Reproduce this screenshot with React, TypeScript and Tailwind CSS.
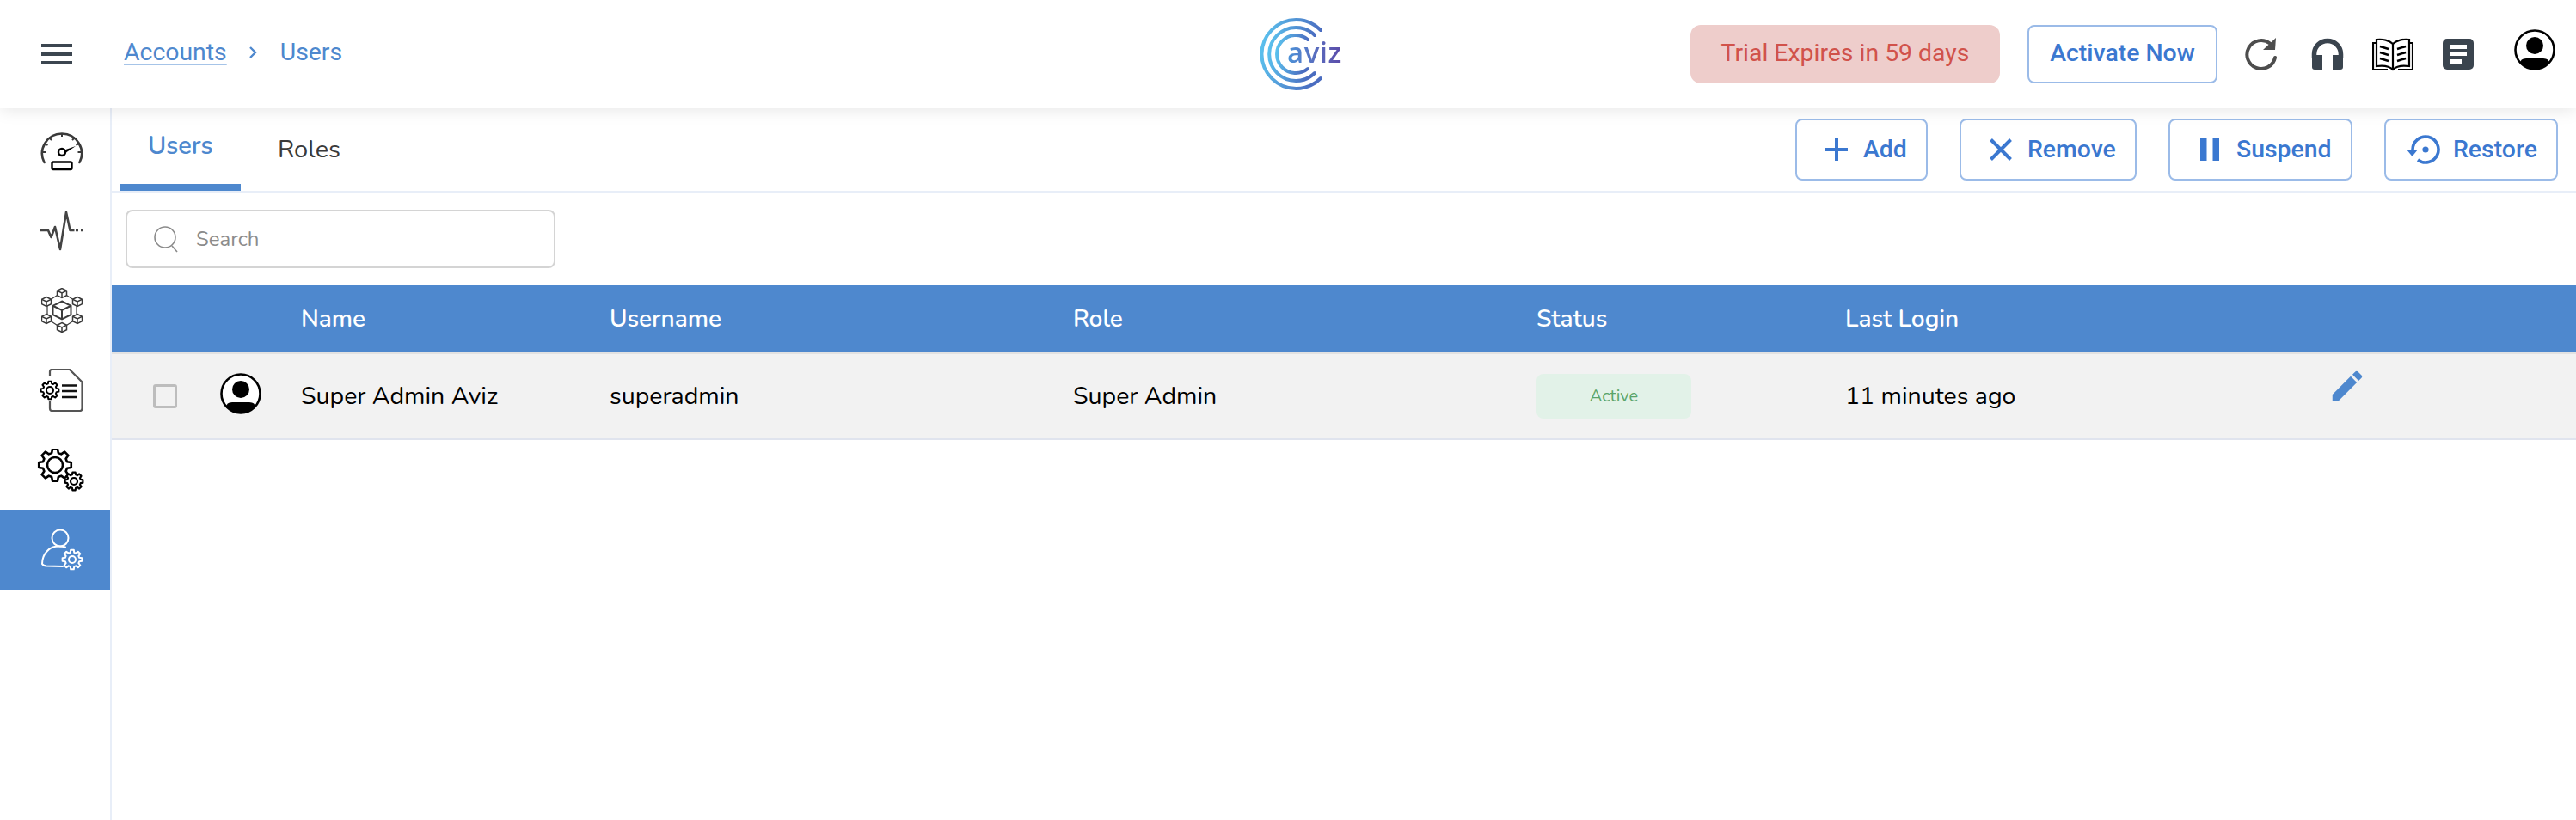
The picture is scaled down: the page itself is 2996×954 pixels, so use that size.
import React from "react";
import { MdEdit } from "react-icons/md";

const gear = (cx: number, cy: number, rOut: number, rIn: number, teeth: number) => {
  const pts: string[] = [];
  const step = (Math.PI * 2) / teeth;
  for (let i = 0; i < teeth; i++) {
    const a = i * step - Math.PI / 2;
    const list: [number, number][] = [
      [rIn, a - step * 0.34],
      [rOut, a - step * 0.2],
      [rOut, a + step * 0.2],
      [rIn, a + step * 0.34],
    ];
    list.forEach(([r, t]) => pts.push(`${(cx + r * Math.cos(t)).toFixed(2)} ${(cy + r * Math.sin(t)).toFixed(2)}`));
  }
  return "M" + pts.join("L") + "Z";
};

const Gauge = () => (
  <svg width="50" height="46" viewBox="0 0 50 46" fill="none" stroke="#3a3a3a">
    <path d="M4.5 36A23 23 0 1 1 45.5 36" strokeWidth="2.6" strokeLinecap="round" />
    <path d="M25 2v4M10 7l3 3M40 7l-3 3M2.5 24h4M47.5 24h-4M5 14l3.5 2M45 14l-3.5 2" strokeWidth="2" />
    <circle cx="25" cy="24" r="4" strokeWidth="2.4" stroke="#000" />
    <path d="M28 21.5L41 17L29 25Z" fill="#000" stroke="none" />
    <rect x="13.5" y="35.5" width="23" height="8.5" rx="1.5" strokeWidth="2.4" stroke="#000" />
  </svg>
);

const Pulse = () => (
  <svg width="50" height="46" viewBox="0 0 50 46" fill="none" stroke="#444" strokeWidth="2.6" strokeLinejoin="round">
    <path d="M0 22h9l3.5 8L17 18l6 26L30 1l4.5 21h5" />
    <path d="M41 22h3M47 22h3" />
  </svg>
);

const Cube = ({ x, y, r }: { x: number; y: number; r: number }) => (
  <g>
    <path d={`M${x} ${y - r}L${x + r} ${y - r / 2}V${y + r / 2}L${x} ${y + r}L${x - r} ${y + r / 2}V${y - r / 2}Z`} />
    <path d={`M${x - r} ${y - r / 2}L${x} ${y}L${x + r} ${y - r / 2}M${x} ${y}V${y + r}`} />
  </g>
);

const Cubes = () => (
  <svg width="48" height="52" viewBox="0 0 48 52" fill="none" stroke="#3a3a3a" strokeWidth="1.5">
    <path d="M24 5L41 16V36L24 47L7 36V16Z" strokeWidth="1.2" />
    <g fill="#fff">
      <Cube x={24} y={6} r={5.5} />
      <Cube x={6} y={16} r={5.5} />
      <Cube x={42} y={16} r={5.5} />
      <Cube x={6} y={36} r={5.5} />
      <Cube x={42} y={36} r={5.5} />
      <Cube x={24} y={46} r={5.5} />
    </g>
    <g strokeWidth="2" fill="#fff">
      <Cube x={24} y={26} r={10.5} />
    </g>
  </svg>
);

const DocGear = () => (
  <svg width="50" height="50" viewBox="0 0 50 50" fill="none">
    <path d="M11 8V3.5Q11 1 13.5 1H34L48.5 15.5V46Q48.5 49 46 49H13.5Q11 49 11 46V38" stroke="#555" strokeWidth="2.2" />
    <path d={gear(11, 25, 10.5, 8, 8)} stroke="#000" strokeWidth="2" strokeLinejoin="round" fill="#fff" />
    <circle cx="11" cy="25" r="4" stroke="#000" strokeWidth="2" />
    <path d="M25 19.5h17M25 26h17M25 33h17" stroke="#111" strokeWidth="2.4" />
  </svg>
);

const Gears = () => (
  <svg width="56" height="50" viewBox="0 0 56 50" fill="none" stroke="#000" strokeLinejoin="round">
    <path d={gear(21, 19, 19, 14.5, 8)} strokeWidth="2.6" />
    <circle cx="21" cy="19" r="9" strokeWidth="2.6" />
    <path d={gear(43, 38, 10.5, 8, 8)} strokeWidth="2.2" fill="#fff" />
    <circle cx="43" cy="38" r="4" strokeWidth="2.2" />
  </svg>
);

const UserGear = () => (
  <svg width="48" height="50" viewBox="0 0 48 50" fill="none" stroke="#fff" strokeLinejoin="round" strokeLinecap="round">
    <circle cx="22" cy="11" r="9.5" strokeWidth="2" />
    <path d="M28 21.5C21 19.5 12 20 7 26C3 30 1 36 1 41Q2 43 6 43.5L25 44" strokeWidth="2" />
    <path d={gear(36, 36, 11.5, 8.5, 8)} strokeWidth="2" />
    <circle cx="36" cy="36" r="4" strokeWidth="2" />
  </svg>
);

const Avatar = () => (
  <svg width="48" height="48" viewBox="0 0 48 48">
    <circle cx="24" cy="24" r="22.5" fill="#fff" stroke="#000" strokeWidth="2.6" />
    <circle cx="24" cy="19" r="10" fill="#000" />
    <path d="M7 40Q7 34 14 34H34Q41 34 41 40Q33 47 24 47Q15 47 7 40Z" fill="#000" />
  </svg>
);

const Logo = () => (
  <div className="relative w-[96px] h-[84px]">
    <svg width="74" height="84" viewBox="0 0 74 84" fill="none" className="absolute left-0 top-0" strokeLinecap="round" strokeWidth="4">
      <defs>
        <linearGradient id="lg" x1="0" y1="0" x2="1" y2="0.2">
          <stop offset="0" stopColor="#5cc6f0" />
          <stop offset="1" stopColor="#4a6cc0" />
        </linearGradient>
      </defs>
      <path d="M71 14A40 40 0 1 0 71 70" stroke="url(#lg)" />
      <path d="M64 20A31 31 0 1 0 64 64" stroke="url(#lg)" />
      <path d="M56 25A22 22 0 1 0 56 59" stroke="url(#lg)" />
    </svg>
    <span className="absolute left-[32px] top-[17px] font-['Open_Sans',sans-serif] font-semibold text-[33px] tracking-[0.5px] leading-[46px] bg-gradient-to-r from-[#4a92d8] to-[#5b4aa8] bg-clip-text text-transparent">
      aviz
    </span>
  </div>
);

const ActionButton = ({ icon, label, w, pl, gap }: { icon: React.ReactNode; label: string; w: string; pl: string; gap: string }) => (
  <button className={`${w} ${pl} ${gap} h-[72px] rounded-[8px] border-2 border-[#9bbbe8] bg-white flex items-center text-[#3b78d0] font-['Roboto',sans-serif] font-medium text-[28.4px]`}>
    {icon}
    <span>{label}</span>
  </button>
);

const cols = "grid grid-cols-[220px_359px_539px_539px_359px_1fr] items-center";

export default function App() {
  return (
    <div className="w-[2996px] h-[954px] bg-white flex flex-col overflow-hidden font-['Nunito','Noto_Sans',sans-serif]">
      <header className="relative z-10 h-[126px] shrink-0 bg-white flex items-center shadow-[0_2px_18px_rgba(0,0,0,0.1)]">
        <div className="w-[1465px] flex items-center pl-[48px]">
          <div className="w-[36px] flex flex-col gap-[6px]">
            <div className="h-[4px] bg-[#3c4650]" />
            <div className="h-[4px] bg-[#3c4650]" />
            <div className="h-[4px] bg-[#3c4650]" />
          </div>
          <nav className="ml-[60px] -mt-[3px] flex items-center text-[#4e88ce] font-['Roboto',sans-serif] text-[28.4px]">
            <span className="underline decoration-[#a6c4e8] decoration-2 underline-offset-4">Accounts</span>
            <svg width="10" height="14" viewBox="0 0 10 14" fill="none" stroke="#4e88ce" strokeWidth="2.4" className="ml-[25px] mr-[27px]"><path d="M2 1l6 6-6 6" /></svg>
            <span>Users</span>
          </nav>
        </div>
        <Logo />
        <div className="ml-[405px] flex items-center">
          <div className="w-[360px] h-[68px] pb-[2px] rounded-[12px] bg-[#eecdcb] flex items-center justify-center text-[#d1524a] font-['Roboto',sans-serif] text-[28.4px]">
            Trial Expires in 59 days
          </div>
          <button className="ml-[32px] w-[221px] h-[68px] pb-[2px] rounded-[8px] border-2 border-[#9bbbe8] flex items-center justify-center text-[#3b78d0] font-['Roboto',sans-serif] font-medium text-[28.4px]">
            Activate Now
          </button>
          <svg className="ml-[32px]" width="40" height="40" viewBox="0 0 40 40" fill="none">
            <path d="M29 7.5A16.5 16.5 0 1 0 35 24" stroke="#4d4d4d" strokeWidth="4" strokeLinecap="round" />
            <path d="M36 1L35 15H21Z" fill="#4d4d4d" />
          </svg>
          <svg className="ml-[37px]" width="38" height="38" viewBox="0 0 38 38" fill="none">
            <path d="M3.5 24V19A15.5 15.5 0 0 1 34.5 19V24" stroke="#3a444e" strokeWidth="5.5" />
            <path d="M1 20H13V37H4Q1 37 1 34ZM25 20H37V34Q37 37 34 37H25Z" fill="#3a444e" />
          </svg>
          <svg className="ml-[33px]" width="48" height="40" viewBox="0 0 48 40" fill="none" stroke="#000" strokeWidth="2.2">
            <path d="M24 8C20 4 12 2 5 3V34C12 33 20 34 24 38C28 34 36 33 43 34V3C36 2 28 4 24 8Z" />
            <path d="M24 8V38M5 7H1V38H18M43 7H47V38H30" />
            <path d="M9 11l10 3M9 18l10 3M9 25l10 3M39 11l-10 3M39 18l-10 3M39 25l-10 3" strokeWidth="2.4" />
          </svg>
          <div className="ml-[34px] w-[36px] h-[36px] rounded-[5px] bg-[#3a444e] flex flex-col justify-center gap-[4px] pl-[8px]">
            <div className="w-[20px] h-[4.5px] bg-white" />
            <div className="w-[20px] h-[4.5px] bg-white" />
            <div className="w-[14px] h-[4.5px] bg-white" />
          </div>
          <div className="ml-[47px] -mt-[10px]"><Avatar /></div>
        </div>
      </header>

      <div className="flex-1 flex min-h-0">
        <aside className="w-[130px] shrink-0 border-r-2 border-[#e8eef8] flex flex-col pt-[20px]">
          <div className="h-[91px] flex items-start justify-center pl-[16px] pt-[7px]"><Gauge /></div>
          <div className="h-[91px] flex items-start justify-center pl-[16px] pt-[9px]"><Pulse /></div>
          <div className="h-[93px] flex items-start justify-center pl-[16px] pt-[7px]"><Cubes /></div>
          <div className="h-[92px] flex items-start justify-center pl-[16px] pt-[8px]"><DocGear /></div>
          <div className="h-[80px] flex items-start justify-center pl-[14px] pt-[9px]"><Gears /></div>
          <div className="h-[93px] bg-[#4e88ce] flex items-center justify-center pl-[16px]"><UserGear /></div>
        </aside>

        <main className="flex-1 min-w-0 flex flex-col">
          <div className="h-[98px] shrink-0 border-b-2 border-[#e8eef8] flex justify-between">
            <div className="flex pl-[10px] text-[29px]">
              <div className="w-[140px] h-[96px] border-b-[8px] border-[#4e88ce] pl-[32px] pt-[25px] text-[#4e88ce] font-semibold leading-[38px]">Users</div>
              <div className="pl-[43px] pt-[29px] text-[#3a3a3a] leading-[38px]">Roles</div>
            </div>
            <div className="flex gap-[37px] pr-[21px] pt-[12px]">
              <ActionButton
                w="w-[154px]"
                pl="pl-[33px]"
                gap="gap-[18px]"
                label="Add"
                icon={<svg width="26" height="26" viewBox="0 0 26 26" stroke="#3b78d0" strokeWidth="4"><path d="M13 0V26M0 13H26" /></svg>}
              />
              <ActionButton
                w="w-[206px]"
                pl="pl-[33px]"
                gap="gap-[18px]"
                label="Remove"
                icon={<svg width="26" height="26" viewBox="0 0 26 26" stroke="#3b78d0" strokeWidth="4"><path d="M1.5 1.5L24.5 24.5M24.5 1.5L1.5 24.5" /></svg>}
              />
              <ActionButton
                w="w-[214px]"
                pl="pl-[35px]"
                gap="gap-[20px]"
                label="Suspend"
                icon={<svg width="22" height="26" viewBox="0 0 22 26" fill="#3b78d0"><rect x="0" y="0" width="7.5" height="26" /><rect x="14.5" y="0" width="7.5" height="26" /></svg>}
              />
              <ActionButton
                w="w-[202px]"
                pl="pl-[24px]"
                gap="gap-[15px]"
                label="Restore"
                icon={<svg width="39" height="34" viewBox="0 0 39 34" fill="none"><path d="M7 17A15 15 0 1 1 13 29" stroke="#3b78d0" strokeWidth="3.6" /><path d="M0 17H13L6.5 25Z" fill="#3b78d0" /><circle cx="22" cy="17" r="3.6" fill="#3b78d0" /></svg>}
              />
            </div>
          </div>

          <div className="h-[108px] shrink-0 pl-[16px] pt-[20px]">
            <div className="w-[500px] h-[68px] rounded-[8px] border-2 border-[#d4d4d4] flex items-center pl-[30px] text-[#8c8c8c] text-[24px]">
              <svg width="30" height="32" viewBox="0 0 30 32" fill="none" stroke="#8a8a8a" strokeWidth="1.6"><circle cx="14" cy="14" r="12" /><path d="M22 24L28 31" /></svg>
              <span className="ml-[20px]">Search</span>
            </div>
          </div>

          <div className={`${cols} h-[78px] shrink-0 bg-[#4e88ce] text-white font-semibold text-[28px]`}>
            <div />
            <div>Name</div>
            <div>Username</div>
            <div>Role</div>
            <div>Status</div>
            <div>Last Login</div>
          </div>

          <div className={`${cols} h-[102px] shrink-0 bg-[#f2f2f2] border-t-2 border-b-2 border-t-[#e2e2e2] border-b-[#e0e4ee] text-black text-[28.5px]`}>
            <div className="flex items-center">
              <div className="ml-[48px] w-[28px] h-[28px] rounded-[3px] border-[3px] border-[#bdbdbd]" />
              <div className="ml-[50px] -mt-[6px]"><Avatar /></div>
            </div>
            <div>Super Admin Aviz</div>
            <div>superadmin</div>
            <div>Super Admin</div>
            <div>
              <div className="w-[180px] h-[52px] rounded-[8px] bg-[#e2f2e8] flex items-center justify-center text-[#5aa469] text-[20px]">Active</div>
            </div>
            <div className="flex items-center">
              <div className="w-[561px]">11 minutes ago</div>
              <MdEdit size={46} color="#4e88ce" className="-mt-[24px]" />
            </div>
          </div>
        </main>
      </div>
    </div>
  );
}
